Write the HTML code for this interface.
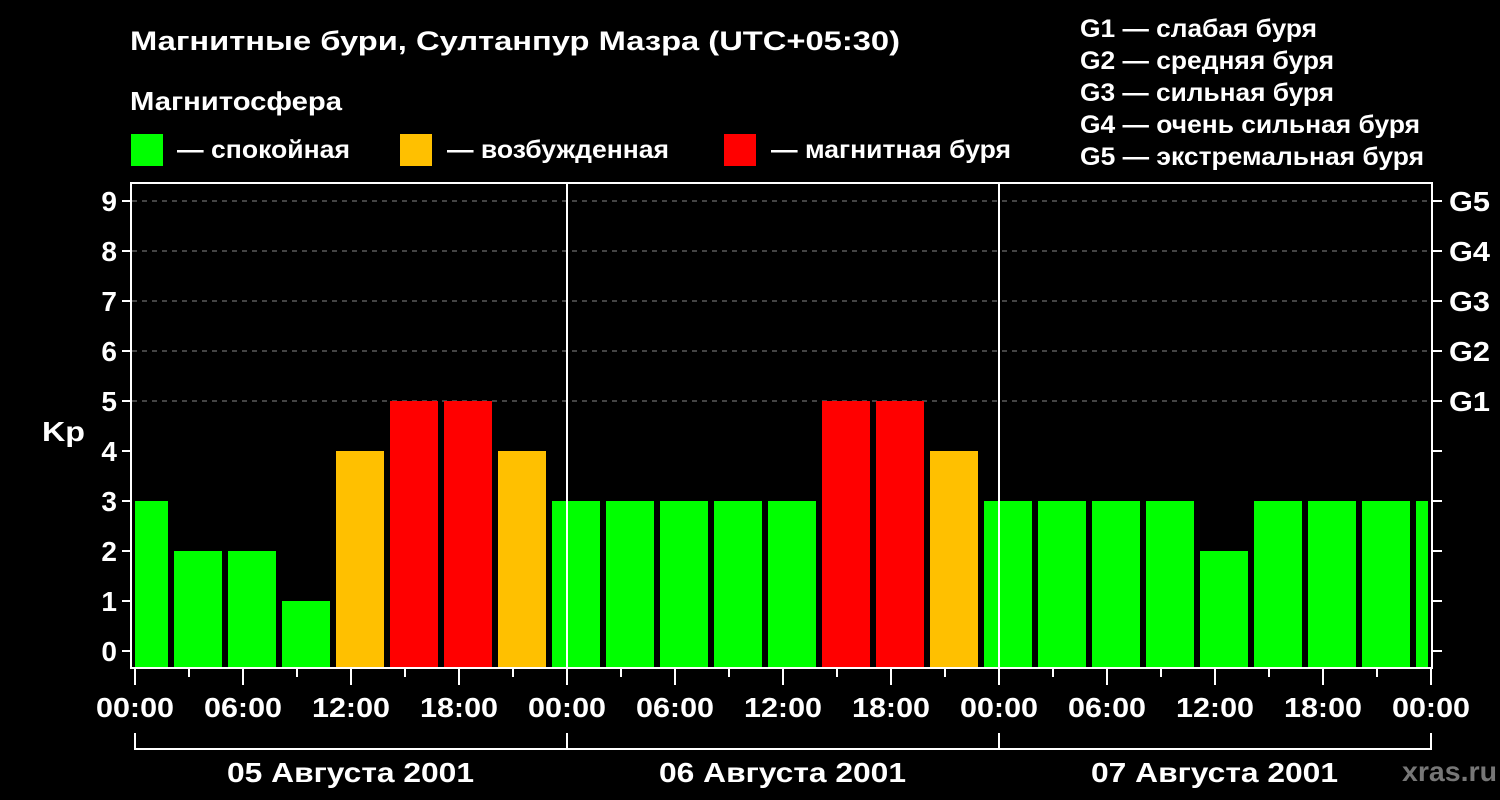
<!DOCTYPE html>
<html><head><meta charset="utf-8"><style>
html,body{margin:0;padding:0;background:#000;width:1500px;height:800px;overflow:hidden}
svg text{font-family:"Liberation Sans",sans-serif;font-weight:bold;fill:#fff}
</style></head><body>
<svg width="1500" height="800" xmlns="http://www.w3.org/2000/svg">
<rect width="1500" height="800" fill="#000"/>
<text x="130" y="50" font-size="27" textLength="770" lengthAdjust="spacingAndGlyphs">Магнитные бури, Султанпур Мазра (UTC+05:30)</text>
<text x="130" y="110" font-size="26" textLength="212" lengthAdjust="spacingAndGlyphs">Магнитосфера</text>
<rect x="131" y="134" width="32" height="32" fill="#00ff00"/>
<text x="177" y="158" font-size="25" textLength="173" lengthAdjust="spacingAndGlyphs">— спокойная</text>
<rect x="400" y="134" width="32" height="32" fill="#ffc000"/>
<text x="447" y="158" font-size="25" textLength="222" lengthAdjust="spacingAndGlyphs">— возбужденная</text>
<rect x="724" y="134" width="32" height="32" fill="#ff0000"/>
<text x="771" y="158" font-size="25" textLength="240" lengthAdjust="spacingAndGlyphs">— магнитная буря</text>
<g font-size="25" lengthAdjust="spacingAndGlyphs">
<text x="1080" y="37" textLength="237" lengthAdjust="spacingAndGlyphs">G1 — слабая буря</text>
<text x="1080" y="69" textLength="254" lengthAdjust="spacingAndGlyphs">G2 — средняя буря</text>
<text x="1080" y="101" textLength="254" lengthAdjust="spacingAndGlyphs">G3 — сильная буря</text>
<text x="1080" y="133" textLength="340" lengthAdjust="spacingAndGlyphs">G4 — очень сильная буря</text>
<text x="1080" y="165" textLength="344" lengthAdjust="spacingAndGlyphs">G5 — экстремальная буря</text>
</g>
<g stroke="#888" stroke-width="1" stroke-dasharray="5,5">
<line x1="132" y1="201" x2="1432" y2="201"/>
<line x1="132" y1="251" x2="1432" y2="251"/>
<line x1="132" y1="301" x2="1432" y2="301"/>
<line x1="132" y1="351" x2="1432" y2="351"/>
<line x1="132" y1="401" x2="1432" y2="401"/>
</g>
<g id="bars"></g>
<line x1="567" y1="183" x2="567" y2="668" stroke="#fff" stroke-width="2"/>
<line x1="999" y1="183" x2="999" y2="668" stroke="#fff" stroke-width="2"/>
<rect x="131" y="183" width="1301" height="485" fill="none" stroke="#fff" stroke-width="2"/>
<g id="ticks" stroke="#fff" stroke-width="2"></g>
<g font-size="28" text-anchor="end">
<text x="117" y="211">9</text><text x="117" y="261">8</text><text x="117" y="311">7</text>
<text x="117" y="361">6</text><text x="117" y="411">5</text><text x="117" y="461">4</text>
<text x="117" y="511">3</text><text x="117" y="561">2</text><text x="117" y="611">1</text>
<text x="117" y="661">0</text>
</g>
<text x="42" y="441" font-size="28" textLength="43" lengthAdjust="spacingAndGlyphs">Kp</text>
<g font-size="28">
<text x="1449" y="211" textLength="41" lengthAdjust="spacingAndGlyphs">G5</text><text x="1449" y="261" textLength="41" lengthAdjust="spacingAndGlyphs">G4</text><text x="1449" y="311" textLength="41" lengthAdjust="spacingAndGlyphs">G3</text>
<text x="1449" y="361" textLength="41" lengthAdjust="spacingAndGlyphs">G2</text><text x="1449" y="411" textLength="41" lengthAdjust="spacingAndGlyphs">G1</text>
</g>
<g id="xl" font-size="28"></g>
<path d="M135 733V749H1431V733M567 733V749M999 733V749" fill="none" stroke="#fff" stroke-width="2"/>
<text x="1402" y="781" font-size="28" style="fill:#777" textLength="95" lengthAdjust="spacingAndGlyphs">xras.ru</text>
</svg>
<script>
var v=[3,2,2,1,4,5,5,4,3,3,3,3,3,5,5,4,3,3,3,3,2,3,3,3,3];
var g=document.getElementById('bars'),s='';
v.forEach(function(k,n){var x1=Math.max(135,120+54*n),x2=Math.min(1428,168+54*n);
var c=k>=5?'#ff0000':k==4?'#ffc000':'#00ff00';var t=651-50*k;
s+='<rect x="'+x1+'" y="'+t+'" width="'+(x2-x1)+'" height="'+(667-t)+'" fill="'+c+'"/>';});
g.innerHTML=s;
var tk='';
for(var i=0;i<=9;i++){var y=651-50*i;tk+='<line x1="122" y1="'+y+'" x2="131" y2="'+y+'"/><line x1="1432" y1="'+y+'" x2="1442" y2="'+y+'"/>';}
for(var j=0;j<=24;j++){var x=135+54*j;var L=(j%2==0)?685:677;tk+='<line x1="'+x+'" y1="668" x2="'+x+'" y2="'+L+'"/>';}
document.getElementById('ticks').innerHTML=tk;
var lb=['00:00','06:00','12:00','18:00'],xs='';
for(var m=0;m<=12;m++){var x=135+108*m;xs+='<text x="'+(x-39)+'" y="717" textLength="78" lengthAdjust="spacingAndGlyphs">'+lb[m%4]+'</text>';}
var d=['05 Августа 2001','06 Августа 2001','07 Августа 2001'];
for(var q=0;q<3;q++){var cx=351+432*q;xs+='<text x="'+(cx-124)+'" y="782" textLength="247" lengthAdjust="spacingAndGlyphs">'+d[q]+'</text>';}
document.getElementById('xl').innerHTML=xs;
</script>
</body></html>
